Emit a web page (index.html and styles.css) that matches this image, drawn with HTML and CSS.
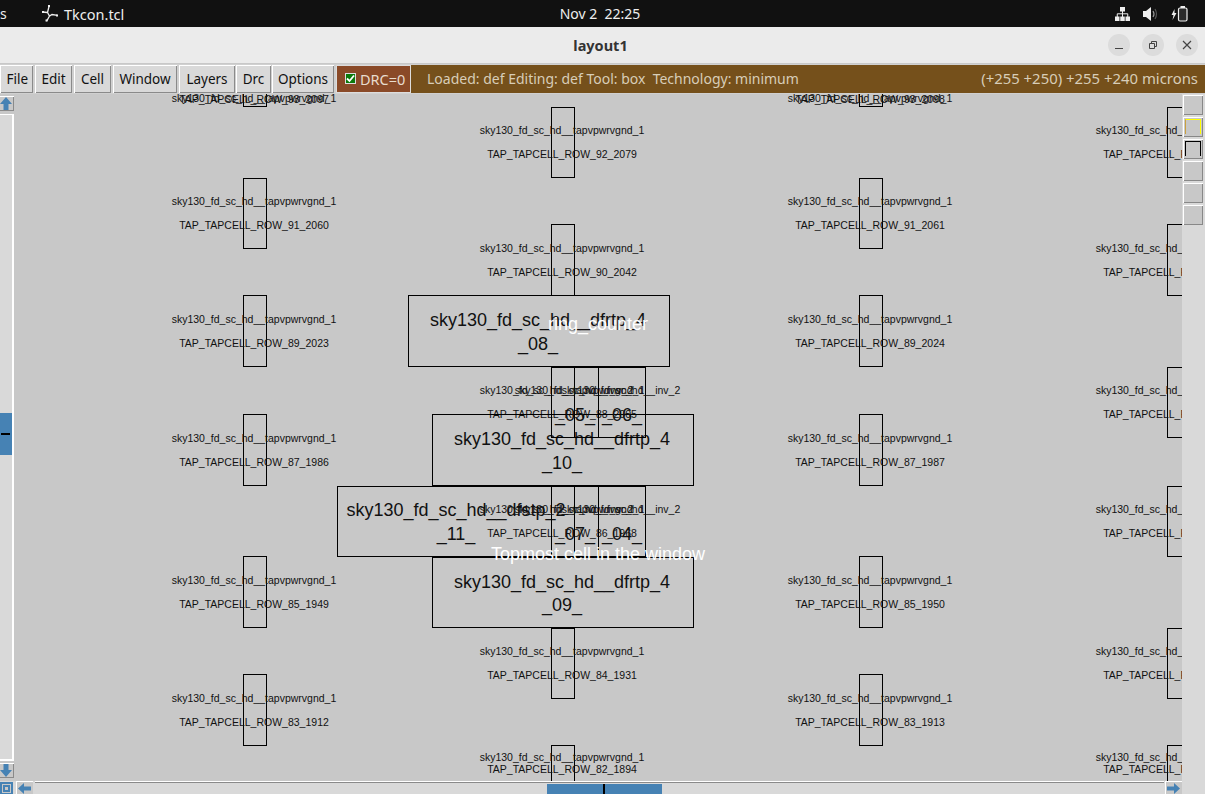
FILE: index.html
```html
<!DOCTYPE html>
<html lang="en">
<head>
<meta charset="utf-8">
<title>layout1</title>
<link rel="stylesheet" href="styles.css">
</head>
<body>
<header class="topbar">
  <div class="top-left">
    <span class="activities">s</span>
    <svg class="app-icon" viewBox="0 0 16 17" width="16" height="17"><path d="M7 1.500 5.500 7.500 7.500 11 10 9.500l5.500.8M.5 7l5 .5M7.500 11l-2.500 4.500H4" fill="none" stroke="#eee" stroke-width="1.300"/><path d="M6 0h2v2H6zM0 6h2v2H0zM14 9.500h2v2h-2zM3.500 14.500h2v2h-2z" fill="#eee"/></svg>
    <span class="app-name">Tkcon.tcl</span>
  </div>
  <div class="clock">Nov 2&nbsp;&nbsp;22:25</div>
  <div class="tray">
    <svg viewBox="0 0 15 14" width="15" height="14"><path d="M5 0h5v4.500H5zM0 9.500h4.500V14H0zM10.500 9.500H15V14h-4.500zM5.250 9.500h4.500V14h-4.500z" fill="#eee"/><path d="M7.500 4v6M2.250 10V6.800h10.500V10" fill="none" stroke="#eee"/></svg>
    <svg viewBox="0 0 15 14" width="15" height="14"><path d="M0 4h3l5-4v14l-5-4H0z" fill="#eee"/><path d="M10 4q2 3 0 6" fill="none" stroke="#999" stroke-width="1.200"/><path d="M12 2q3 5 0 10" fill="none" stroke="#555" stroke-width="1.200"/></svg>
    <svg viewBox="0 0 17 16" width="17" height="16"><path d="M3.500 3 .5 9h2l-1 5 4-7h-2z" fill="#eee"/><rect x="7.500" y="2" width="8.500" height="13" rx="1.500" fill="#2a2a2a" stroke="#eee" stroke-width="1.200"/><rect x="9.500" y="0" width="4.500" height="2" fill="#eee"/></svg>
  </div>
</header>

<div class="titlebar">
  <span class="title">layout1</span>
  <div class="win-controls">
    <span class="win-btn"><svg viewBox="0 0 10 10" width="10" height="10"><path d="M1 8.500h8" stroke="#444" stroke-width="1"/></svg></span>
    <span class="win-btn"><svg viewBox="0 0 10 10" width="10" height="10"><path d="M1.500 3.500h5v5h-5zM3.500 3.500v-2h5v5h-2" fill="none" stroke="#444"/></svg></span>
    <span class="win-btn"><svg viewBox="0 0 10 10" width="10" height="10"><path d="M1 1l8 8M9 1l-8 8" stroke="#444" stroke-width="1.200"/></svg></span>
  </div>
</div>

<nav class="toolbar">
  <button class="menu menu-file">File</button>
  <button class="menu menu-edit">Edit</button>
  <button class="menu menu-cell">Cell</button>
  <button class="menu menu-window">Window</button>
  <button class="menu menu-layers">Layers</button>
  <button class="menu menu-drc">Drc</button>
  <button class="menu menu-options">Options</button>
  <div class="drc"><span class="check"><svg viewBox="0 0 9 9" width="9" height="9"><path d="M1 4.500l2.500 2.500 4.500-5.500" fill="none" stroke="#fff" stroke-width="1.800"/></svg></span>DRC=0</div>
  <div class="status">
    <span class="status-left">Loaded: def Editing: def Tool: box&nbsp;&nbsp;Technology: minimum</span>
    <span class="status-right">(+255 +250) +255 +240 microns</span>
  </div>
</nav>

<div class="workspace">
  <aside class="vscroll">
    <div class="vbtn vbtn-up"><svg viewBox="0 0 12 13" width="12" height="13"><path d="M6 0 12 7H8.500v6h-5V7H0z" fill="#4682b4"/></svg></div>
    <div class="vtrack"><div class="vthumb"><span class="thumb-mark"></span></div></div>
    <div class="vbtn vbtn-down"><svg viewBox="0 0 12 13" width="12" height="13"><path d="M6 13 12 6H8.500V0h-5v6H0z" fill="#4682b4"/></svg></div>
  </aside>

  <main class="canvas">
    <div class="cell clip-top" style="left:228px;top:0;width:24px;height:13px"><span class="label">sky130_fd_sc_hd__tapvpwrvgnd_1</span><span class="label">TAP_TAPCELL_ROW_93_2097</span></div>
    <div class="cell clip-top" style="left:844px;top:0;width:24px;height:13px"><span class="label">sky130_fd_sc_hd__tapvpwrvgnd_1</span><span class="label">TAP_TAPCELL_ROW_93_2098</span></div>

    <div class="cell short" style="left:228px;top:84px;width:24px;height:71px"><span class="label">sky130_fd_sc_hd__tapvpwrvgnd_1</span><span class="label">TAP_TAPCELL_ROW_91_2060</span></div>
    <div class="cell" style="left:228px;top:201px;width:24px;height:72px"><span class="label">sky130_fd_sc_hd__tapvpwrvgnd_1</span><span class="label">TAP_TAPCELL_ROW_89_2023</span></div>
    <div class="cell" style="left:228px;top:320px;width:24px;height:72px"><span class="label">sky130_fd_sc_hd__tapvpwrvgnd_1</span><span class="label">TAP_TAPCELL_ROW_87_1986</span></div>
    <div class="cell" style="left:228px;top:462px;width:24px;height:72px"><span class="label">sky130_fd_sc_hd__tapvpwrvgnd_1</span><span class="label">TAP_TAPCELL_ROW_85_1949</span></div>
    <div class="cell" style="left:228px;top:580px;width:24px;height:72px"><span class="label">sky130_fd_sc_hd__tapvpwrvgnd_1</span><span class="label">TAP_TAPCELL_ROW_83_1912</span></div>

    <div class="cell short" style="left:844px;top:84px;width:24px;height:71px"><span class="label">sky130_fd_sc_hd__tapvpwrvgnd_1</span><span class="label">TAP_TAPCELL_ROW_91_2061</span></div>
    <div class="cell" style="left:844px;top:201px;width:24px;height:72px"><span class="label">sky130_fd_sc_hd__tapvpwrvgnd_1</span><span class="label">TAP_TAPCELL_ROW_89_2024</span></div>
    <div class="cell" style="left:844px;top:320px;width:24px;height:72px"><span class="label">sky130_fd_sc_hd__tapvpwrvgnd_1</span><span class="label">TAP_TAPCELL_ROW_87_1987</span></div>
    <div class="cell" style="left:844px;top:462px;width:24px;height:72px"><span class="label">sky130_fd_sc_hd__tapvpwrvgnd_1</span><span class="label">TAP_TAPCELL_ROW_85_1950</span></div>
    <div class="cell" style="left:844px;top:580px;width:24px;height:72px"><span class="label">sky130_fd_sc_hd__tapvpwrvgnd_1</span><span class="label">TAP_TAPCELL_ROW_83_1913</span></div>

    <div class="cell short" style="left:536px;top:13px;width:24px;height:71px"><span class="label">sky130_fd_sc_hd__tapvpwrvgnd_1</span><span class="label">TAP_TAPCELL_ROW_92_2079</span></div>
    <div class="cell" style="left:536px;top:130px;width:24px;height:72px"><span class="label">sky130_fd_sc_hd__tapvpwrvgnd_1</span><span class="label">TAP_TAPCELL_ROW_90_2042</span></div>
    <div class="cell short" style="left:536px;top:273px;width:24px;height:71px"><span class="label">sky130_fd_sc_hd__tapvpwrvgnd_1</span><span class="label">TAP_TAPCELL_ROW_88_2005</span></div>
    <div class="cell short" style="left:536px;top:392px;width:24px;height:71px"><span class="label">sky130_fd_sc_hd__tapvpwrvgnd_1</span><span class="label">TAP_TAPCELL_ROW_86_1968</span></div>
    <div class="cell short" style="left:536px;top:534px;width:24px;height:71px"><span class="label">sky130_fd_sc_hd__tapvpwrvgnd_1</span><span class="label">TAP_TAPCELL_ROW_84_1931</span></div>
    <div class="cell short clip-bottom" style="left:536px;top:651px;width:24px;height:36px"><span class="label">sky130_fd_sc_hd__tapvpwrvgnd_1</span><span class="label">TAP_TAPCELL_ROW_82_1894</span></div>

    <div class="cell short" style="left:1152px;top:13px;width:24px;height:71px"><span class="label">sky130_fd_sc_hd__tapvpwrvgnd_1</span><span class="label">TAP_TAPCELL_ROW_92_2080</span></div>
    <div class="cell" style="left:1152px;top:130px;width:24px;height:72px"><span class="label">sky130_fd_sc_hd__tapvpwrvgnd_1</span><span class="label">TAP_TAPCELL_ROW_90_2043</span></div>
    <div class="cell short" style="left:1152px;top:273px;width:24px;height:71px"><span class="label">sky130_fd_sc_hd__tapvpwrvgnd_1</span><span class="label">TAP_TAPCELL_ROW_88_2006</span></div>
    <div class="cell short" style="left:1152px;top:392px;width:24px;height:71px"><span class="label">sky130_fd_sc_hd__tapvpwrvgnd_1</span><span class="label">TAP_TAPCELL_ROW_86_1969</span></div>
    <div class="cell short" style="left:1152px;top:534px;width:24px;height:71px"><span class="label">sky130_fd_sc_hd__tapvpwrvgnd_1</span><span class="label">TAP_TAPCELL_ROW_84_1932</span></div>
    <div class="cell short clip-bottom" style="left:1152px;top:651px;width:24px;height:36px"><span class="label">sky130_fd_sc_hd__tapvpwrvgnd_1</span><span class="label">TAP_TAPCELL_ROW_82_1895</span></div>

    <div class="cell big" style="left:393px;top:201px;width:262px;height:72px"><span class="label">sky130_fd_sc_hd__dfrtp_4</span><span class="label">_08_</span></div>
    <div class="cell big" style="left:417px;top:320px;width:262px;height:72px"><span class="label">sky130_fd_sc_hd__dfrtp_4</span><span class="label">_10_</span></div>
    <div class="cell big" style="left:417px;top:463px;width:262px;height:71px"><span class="label">sky130_fd_sc_hd__dfrtp_4</span><span class="label">_09_</span></div>
    <div class="cell big short" style="left:322px;top:392px;width:238px;height:71px"><span class="label">sky130_fd_sc_hd__dfstp_2</span><span class="label">_11_</span></div>

    <div class="cell mid" style="left:536px;top:273px;width:48px;height:71px"><span class="label small">sky130_fd_sc_hd__inv_2</span><span class="label">_05_</span></div>
    <div class="cell mid" style="left:583px;top:273px;width:48px;height:71px"><span class="label small">sky130_fd_sc_hd__inv_2</span><span class="label">_06_</span></div>
    <div class="cell mid" style="left:536px;top:392px;width:48px;height:71px"><span class="label small">sky130_fd_sc_hd__inv_2</span><span class="label">_07_</span></div>
    <div class="cell mid" style="left:583px;top:392px;width:48px;height:71px"><span class="label small">sky130_fd_sc_hd__inv_2</span><span class="label">_04_</span></div>

    <span class="note note-ring">ring_counter</span>
    <span class="note note-top">Topmost cell in the window</span>
  </main>

  <aside class="palette">
    <div class="swatch"></div>
    <div class="swatch"><span class="swatch-yellow"></span></div>
    <div class="swatch"><span class="swatch-black"></span></div>
    <div class="swatch"></div>
    <div class="swatch"></div>
    <div class="swatch"></div>
  </aside>
</div>

<footer class="hbar">
  <div class="corner"><span class="corner-inner"></span></div>
  <div class="hbtn"><svg viewBox="0 0 13 11" width="13" height="11"><path d="M0 5.500 6 0v3.500h7v4H6V11z" fill="#4682b4"/></svg></div>
  <div class="htrack"><div class="hthumb"><span class="hmark"></span></div></div>
  <div class="hbtn"><svg viewBox="0 0 13 11" width="13" height="11"><path d="M13 5.500 7 0v3.500H0v4h7V11z" fill="#4682b4"/></svg></div>
</footer>
</body>
</html>
```

FILE: styles.css
```css
* { box-sizing: border-box; }
html, body { margin: 0; padding: 0; height: 794px; overflow: hidden; }
body { display: flex; flex-direction: column; width: 1205px; background: #d9d9d9; font-family: "Noto Sans", sans-serif; }

.topbar { height: 27px; background: #111111; color: #eeeeee; position: relative; display: flex; align-items: center; justify-content: space-between; font-size: 14px; flex: none; }
.top-left { display: flex; align-items: center; }
.activities { width: 42px; margin-top: -1px; }
.app-icon { margin-right: 6px; }
.app-name { font-size: 14.5px; }
.clock { position: absolute; left: 0; right: 0; text-align: center; padding-right: 5px; font-size: 14px; pointer-events: none; }
.tray { display: flex; align-items: center; gap: 13px; padding-right: 17px; }

.titlebar { height: 37px; background: #ebebeb; border-bottom: 1px solid #c8c8c8; position: relative; display: flex; align-items: center; justify-content: flex-end; flex: none; }
.title { position: absolute; left: 0; right: 0; text-align: center; padding-right: 4px; font-size: 14.5px; font-weight: 700; color: #333; }
.win-controls { display: flex; gap: 12px; padding-right: 7px; position: relative; }
.win-btn { width: 22px; height: 22px; border-radius: 50%; background: #dcdcdc; display: flex; align-items: center; justify-content: center; }

.toolbar { height: 30px; display: flex; padding: 1px 0; gap: 2px; background: #d0d0d0; flex: none; }
.menu { height: 28px; padding: 0 0 1px; border: 0; background: #d9d9d9; color: #111; font: 13.5px "Noto Sans", sans-serif; box-shadow: inset 1px 1px 0 #fff, inset -1px -1px 0 #8a8a8a; }
.menu-file { width: 33px; text-align: right; padding-right: 5px; }
.menu-edit { width: 37px; }
.menu-cell { width: 37px; }
.menu-window { width: 64px; }
.menu-layers { width: 56px; }
.menu-drc { width: 35px; margin-left: -1px; }
.menu-options { width: 62px; margin-left: -1px; }
.drc { width: 75px; height: 28px; background: #8a4a28; color: #e8dccf; font-size: 14.5px; display: flex; align-items: center; padding: 0 0 1px 9px; gap: 4px; box-shadow: inset 1px 1px 0 #ddd, inset -1px -1px 0 #ddd; }
.check { width: 11px; height: 11px; background: #0a7a0a; border: 1px solid #ddd; display: flex; align-items: center; justify-content: center; }
.status { flex: 1; margin: 0 0 0 -2px; height: 28px; background: #75501b; color: #d8cdb8; display: flex; align-items: center; justify-content: space-between; padding: 0 7px 2px 16px; white-space: pre; }
.status-left { font-size: 14px; }
.status-right { font-size: 14.9px; }

.workspace { flex: 1; display: flex; min-height: 0; }
.vscroll { width: 15px; flex: none; display: flex; flex-direction: column; background: #c8c8c8; padding-top: 2px; }
.vbtn { width: 14px; height: 15px; background: #c8c8c8; box-shadow: inset 0 1px 0 #fff, inset -1px -1px 0 #8a8a8a; display: flex; align-items: center; justify-content: flex-start; flex: none; }
.vtrack { flex: 1; margin: 3px 1px 2px 0; border-top: 1px solid #fff; border-right: 2px solid #fff; border-bottom: 2px solid #fff; background: #d9d9d9; position: relative; }
.vthumb { position: absolute; left: 0; right: 0; top: 298px; height: 42px; background: #4682b4; display: flex; align-items: center; }
.thumb-mark { width: 9px; height: 2px; margin-left: 1px; background: #000; }
.vbtn-down { margin-bottom: 3px; }

.canvas { flex: 1; position: relative; overflow: hidden; background: #c8c8c8; color: #111; }
.cell { position: absolute; border: 1px solid #000; display: flex; flex-direction: column; align-items: center; justify-content: space-evenly; font: 10.5px "Liberation Sans", sans-serif; }
.clip-top { border-top: 0; justify-content: center; gap: 1px; padding-bottom: 4px; }
.clip-bottom { border-bottom: 0; }
.label { display: block; height: 0; line-height: 0; white-space: nowrap; transform: translateX(-1px); }
.short .label:first-child { transform: translate(-1px, -1px); }
.big, .mid { font-size: 18px; }
.big .label { transform: translate(-1px, 1px); }
.big.short .label { transform: translate(0, 1px); }
.big.short .label:first-child { transform: translate(0, 0); }
.mid .label { transform: translate(0, 1px); }
.mid .label.small { font-size: 10.5px; transform: translate(-1px, -1px); }
.note { position: absolute; color: #fff; font: 18px "Liberation Sans", sans-serif; white-space: nowrap; line-height: 18px; }
.note-ring { left: 533px; top: 221px; }
.note-top { left: 476px; top: 451px; }

.palette { width: 23px; flex: none; background: #d9d9d9; display: flex; flex-direction: column; gap: 2px; padding: 1px 2px 0 1px; }
.swatch { height: 20px; background: #c8c8c8; box-shadow: inset 1px 1px 0 #fff, inset -1px -1px 0 #888; padding: 2px 2px 3px 2px; }
.swatch-yellow { display: block; height: 100%; border: 1px solid #ffff00; border-left-color: #c9a040; border-bottom: 0; }
.swatch-black { display: block; height: 100%; border: 1px solid #000; border-bottom: 0; }

.hbar { height: 13px; flex: none; display: flex; background: #d9d9d9; padding-right: 23px; }
.corner { width: 13px; height: 12px; margin: 1px 3px 0 0; background: #4682b4; display: flex; align-items: center; justify-content: center; flex: none; }
.corner-inner { width: 7px; height: 7px; background: #c8c8c8; border: 2px solid #4682b4; outline: 1px solid #c8c8c8; }
.hbtn { width: 17px; height: 13px; background: #c8c8c8; box-shadow: inset 1px 1px 0 #fff; display: flex; align-items: flex-end; justify-content: center; flex: none; }
.htrack { flex: 1; position: relative; margin: 0 1px 0 2px; border-top: 1px solid #fff; box-shadow: inset 0 1px 0 #8a8a8a; background: #d9d9d9; }
.hthumb { position: absolute; left: 512px; top: 2px; width: 115px; bottom: 0; background: #4682b4; display: flex; justify-content: center; }
.hmark { width: 2px; height: 100%; margin-left: -1px; background: #000; }
```
